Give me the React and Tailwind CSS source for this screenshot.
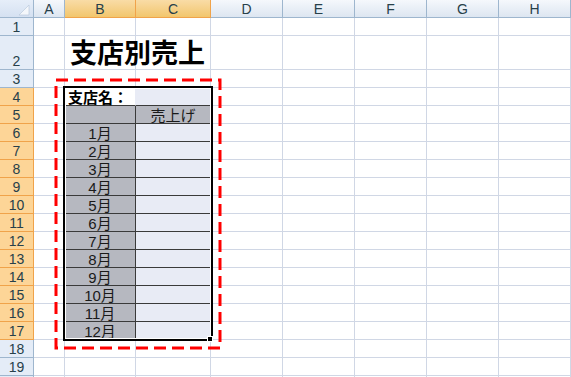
import React from "react";

const letters = ["A", "B", "C", "D", "E", "F", "G", "H"];
const widths = [
  "w-[31px]",
  "w-[71px]",
  "w-[75px]",
  "w-[72px]",
  "w-[72px]",
  "w-[72px]",
  "w-[72px]",
  "w-[72px]",
];

const JP = "font-['Liberation_Sans','Noto_Sans_CJK_JP',sans-serif]";

function ColHeader() {
  return (
    <div className="flex h-[18px]">
      <div className="relative w-[34px] shrink-0 border-r border-b border-[#9eb6ce] bg-linear-to-b from-[#e6eef9] to-[#d5e1f1]">
        <svg className="absolute left-[19px] top-[5px]" width="11" height="11" viewBox="0 0 11 11">
          <polygon points="10,0 10,10 0,10" fill="#f4f7fb" stroke="#b4c4d8" strokeWidth="0.6" />
        </svg>
      </div>
      {letters.map((l, i) => {
        const sel = l === "B" || l === "C";
        return (
          <div
            key={l}
            className={`${widths[i]} shrink-0 flex items-center justify-center border-r border-b text-[14px] leading-none text-[#27404a] ${
              sel
                ? "bg-linear-to-b from-[#f9dca6] to-[#f2c66c] border-[#f0a34a]"
                : "bg-linear-to-b from-[#f5f8fc] to-[#dde6f1] border-[#9eb6ce]"
            }`}
          >
            {l}
          </div>
        );
      })}
    </div>
  );
}

function Cell({ i, r }) {
  const w = widths[i];
  const col = letters[i];
  const inTable = r >= 4 && r <= 17 && (col === "B" || col === "C");
  if (r === 2 && col === "B") {
    return (
      <div className={`${w} shrink-0 relative border-r border-b border-[#d0d7e5] bg-white`}>
        <div className={`absolute left-[5px] bottom-[1px] whitespace-nowrap font-bold text-[27px] leading-none text-black ${JP}`}>
          支店別売上
        </div>
      </div>
    );
  }
  if (!inTable) {
    return <div className={`${w} shrink-0 border-r border-b border-[#d0d7e5] bg-white`} />;
  }
  if (r === 4) {
    if (col === "B") {
      return (
        <div className={`${w} shrink-0 relative border-r border-b border-r-[#e8ebf5] border-b-[#3a3a3a] bg-white`}>
          <div className={`absolute left-[3px] bottom-[0px] whitespace-nowrap font-bold text-[15px] leading-none text-black ${JP}`}>
            支店名：
          </div>
        </div>
      );
    }
    return <div className={`${w} shrink-0 border-r border-b border-[#3a3a3a] bg-[#e8ebf5]`} />;
  }
  if (r === 5) {
    if (col === "B") {
      return <div className={`${w} shrink-0 border-r border-b border-[#3a3a3a] bg-[#b6b8c0]`} />;
    }
    return (
      <div className={`${w} shrink-0 flex items-end justify-center border-r border-b border-[#3a3a3a] bg-[#b6b8c0]`}>
        <span className={`text-[15px] leading-none text-[#1a1a1a] ${JP}`}>売上げ</span>
      </div>
    );
  }
  if (col === "B") {
    return (
      <div className={`${w} shrink-0 flex items-end justify-center border-r border-b border-[#3a3a3a] bg-[#b6b8c0]`}>
        <span className={`text-[15px] leading-none text-[#1a1a1a] ${JP}`}>{r - 5}月</span>
      </div>
    );
  }
  return <div className={`${w} shrink-0 border-r border-b border-[#3a3a3a] bg-[#e8ebf5]`} />;
}

function Row({ r }) {
  const sel = r >= 4 && r <= 17;
  const h = r === 2 ? "h-[34px]" : "h-[18px]";
  return (
    <div className={`flex ${h}`}>
      <div
        className={`w-[34px] shrink-0 flex items-end justify-center pb-[1px] border-r border-b text-[14px] leading-none text-[#27404a] font-['Liberation_Sans',sans-serif] ${
          sel ? "bg-[#fdd597] border-[#f0a34a]" : "bg-[#e4ecf7] border-[#9eb6ce]"
        }`}
      >
        {r <= 19 ? r : ""}
      </div>
      {letters.map((l, i) => (
        <Cell key={l} i={i} r={r} />
      ))}
    </div>
  );
}

export default function App() {
  const rows = Array.from({ length: 20 }, (_, k) => k + 1);
  return (
    <div className="relative w-[571px] h-[377px] overflow-hidden bg-white font-['Liberation_Sans',sans-serif]">
      <ColHeader />
      {rows.map((r) => (
        <Row key={r} r={r} />
      ))}
      {/* selection frame */}
      <div className="absolute left-[63px] top-[86px] w-[150px] h-[255px] border-2 border-black shadow-[inset_0_0_0_1px_#ffffff] pointer-events-none" />
      <div className="absolute left-[207px] top-[336px] w-[6px] h-[6px] bg-black border border-white pointer-events-none" />
      {/* red dashed outline */}
      <svg className="absolute left-[53px] top-[77px] pointer-events-none" width="170" height="274" viewBox="0 0 170 274">
        <rect x="3" y="3" width="164" height="268" fill="none" stroke="#ff0000" strokeWidth="3" strokeDasharray="12 6" />
      </svg>
    </div>
  );
}
